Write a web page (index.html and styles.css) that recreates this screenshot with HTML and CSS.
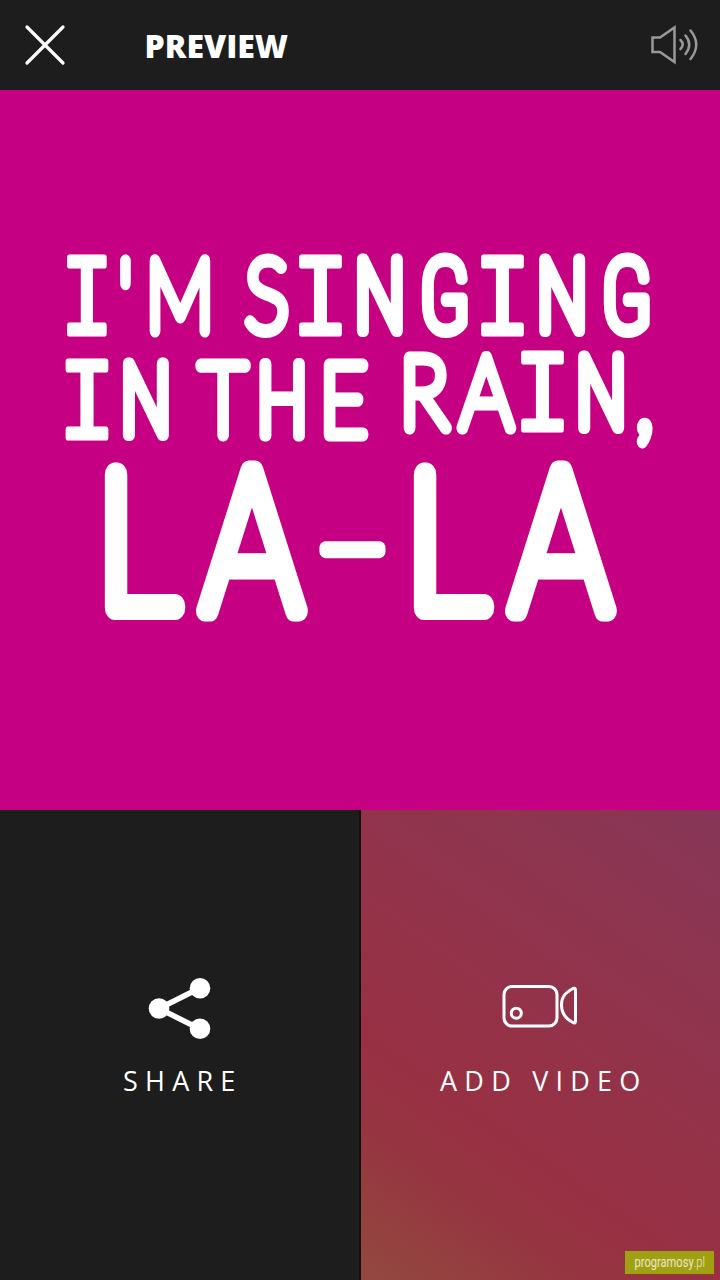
FILE: index.html
```
<!DOCTYPE html>
<html lang="en">
<head>
  <meta charset="UTF-8" />
  <title>Preview</title>
  <link rel="stylesheet" href="styles.css">
</head>
<body>

  <!-- Top bar -->
  <header class="topbar">
    <svg class="close-icon" viewBox="0 0 42 42">
      <path d="M3 3L39 39M39 3L3 39" />
    </svg>
    <h1>PREVIEW</h1>
    <svg class="sound-icon" viewBox="0 0 50 40">
      <path d="M2.5 12.5H10L24.5 2.5V37L10 27H2.5Z" />
      <path d="M30.500 15Q35 19.500 30.500 24M35.500 10.500Q43 19.500 35.500 29M40.500 5.500Q52 19.500 40.500 34" stroke-linecap="round" />
    </svg>
  </header>

  <!-- Lyrics card -->
  <main class="preview">
    <svg class="lyrics" viewBox="0 90 720 720">
      <g class="small" transform="scale(.76 1)">
        <text y="334.500 331.500 331.500" x="114.5 165.1 236.8"><tspan class="slab">I</tspan>'M</text>
      </g>
      <g class="small" transform="scale(.82 1)">
        <text y="331.500 334.500 331.500 331.500 334.500 331.500 331.500" x="325.6 391 463.4 542.7 612.8 685.4 764.6">S<tspan class="slab">I</tspan><tspan class="narrow">NG</tspan><tspan class="slab">I</tspan><tspan class="narrow">NG</tspan></text>
        <text y="438.500 435.500" x="106 178"><tspan class="slab">I</tspan><tspan class="narrow">N</tspan></text>
        <text y="435 435.500 435" x="272 344 419">T<tspan class="narrow">H</tspan>E</text>
        <text y="428 428 430.500 428 430" x="517 593 661.6 733 786">RA<tspan class="slab">I</tspan><tspan class="narrow">N</tspan>,</text>
      </g>
      <g class="big" transform="scale(.85 1)">
        <text y="608 611 635 608 611" x="161 296.5 414.7 524.5 660">L<tspan class="wide">A</tspan><tspan class="dash">-</tspan>L<tspan class="wide">A</tspan></text>
      </g>
    </svg>
  </main>

  <!-- Bottom actions -->
  <footer class="actions">
    <div class="action share">
      <svg class="action-icon" viewBox="0 0 76 64">
        <path d="M58 12L17 32.500L58 53" fill="none" stroke="#fff" stroke-width="5.500" />
        <circle cx="17" cy="32.500" r="10.300" />
        <circle cx="58" cy="12.200" r="10.300" />
        <circle cx="58" cy="52.800" r="10.300" />
      </svg>
      <span>SHARE</span>
    </div>
    <div class="action video">
      <svg class="action-icon camera" viewBox="0 0 76 64">
        <rect x="1" y="10.500" width="53" height="39.500" rx="8" />
        <circle cx="13.300" cy="37.200" r="5" />
        <path d="M58.500 29C58.500 20 63 16.500 70 12.500Q72.500 11.500 72.500 14V45Q72.500 48 70 46.500C63 43 58.500 38 58.500 29Z" />
      </svg>
      <span>ADD VIDEO</span>
    </div>
  </footer>

  <div class="watermark">
    <svg viewBox="0 0 89 23">
      <text x="9.500" y="15.500" textLength="70.500" lengthAdjust="spacingAndGlyphs">programosy<tspan class="tld">.pl</tspan></text>
    </svg>
  </div>

</body>
</html>
```

FILE: styles.css
```
body {
  margin: 0;
  width: 720px;
  height: 1280px;
  display: flex;
  flex-direction: column;
  background: #1d1d1d;
  color: #fff;
  font-family: "Open Sans", sans-serif;
  overflow: hidden;
}

svg {
  display: block;
}

/* Top bar */
.topbar {
  height: 90px;
  box-sizing: border-box;
  padding: 0 20px 0 24px;
  display: flex;
  align-items: center;
}

.close-icon {
  width: 42px;
  height: 42px;
  fill: none;
  stroke: #fff;
  stroke-width: 3.2;
  stroke-linecap: round;
}

h1 {
  margin: 2px auto 0 78.5px;
  font-size: 32px;
  font-weight: 800;
  line-height: 44px;
}

.sound-icon {
  width: 50px;
  height: 40px;
  fill: none;
  stroke: #999;
  stroke-width: 2.5;
}

/* Lyrics card */
.preview {
  height: 720px;
  background: #c50082;
}

/* Thin letters with a thick round stroke, so the ends come out rounded */
.lyrics {
  width: 720px;
  height: 720px;
  fill: #fff;
  stroke: #fff;
  stroke-linejoin: round;
  text-anchor: middle;
  font-family: Lato, sans-serif;
  font-weight: 100;
}

.small {
  font-size: 101px;
  stroke-width: 13px;
}

.narrow,
.wide {
  font-family: Roboto, sans-serif;
}

.narrow {
  font-stretch: 75%;
  stroke-width: 12px;
}

.wide {
  font-size: 196px;
  stroke-width: 21px;
}

.slab {
  font-family: "Liberation Mono", monospace;
  font-size: 117px;
  stroke-width: 5px;
}

.big {
  font-size: 191px;
  stroke-width: 24px;
}

.dash {
  font-size: 290px;
  stroke-width: 14px;
}

/* Bottom actions */
.actions {
  flex: 1;
  display: grid;
  grid-template-columns: 359px 359px;
  column-gap: 2px;
  background: #111;
}

.action {
  display: flex;
  flex-direction: column;
  align-items: center;
  padding-top: 166px;
}

.share {
  background: #1d1d1d;
}

.video {
  background: linear-gradient(215deg, #863657 0%, #8f344e 28%, #983043 67%, #963541 78%, #93493f 100%);
}

.action-icon {
  width: 76px;
  height: 64px;
  fill: #fff;
}

.camera {
  fill: none;
  stroke: #fff;
  stroke-width: 3;
  overflow: visible;
}

.action span {
  margin-top: 23px;
  padding-left: 6.5px;
  font-size: 27px;
  line-height: 36px;
  letter-spacing: 7.2px;
}

/* Site badge in the corner */
.watermark {
  position: absolute;
  left: 625px;
  top: 1251px;
  width: 89px;
  height: 23px;
  background: #a0a112;
}

.watermark text {
  font-family: Roboto, sans-serif;
  font-size: 14px;
  font-weight: 400;
  fill: #eee6cd;
}

.watermark .tld {
  font-weight: 300;
}
```
